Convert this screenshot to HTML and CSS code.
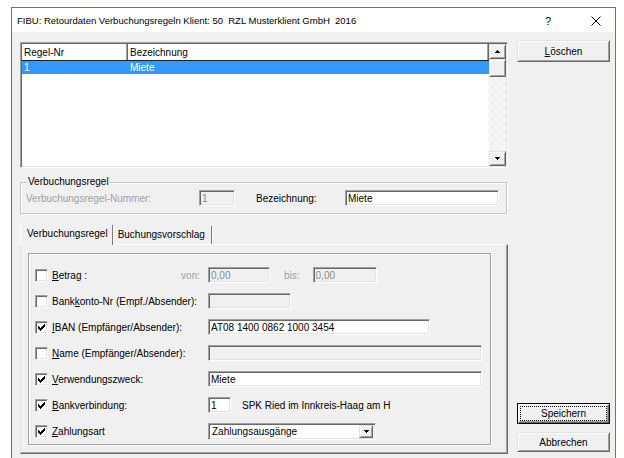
FILE: index.html
```
<!DOCTYPE html>
<html lang="de">
<head>
<meta charset="utf-8">
<title>FIBU: Retourdaten Verbuchungsregeln</title>
<link rel="stylesheet" href="styles.css">
</head>
<body>
<div class="window">
  <div class="titlebar">
    <span class="title">FIBU: Retourdaten Verbuchungsregeln Klient: 50&nbsp; RZL Musterklient GmbH&nbsp; 2016</span>
    <span class="tb-help">?</span>
    <span class="tb-close">
      <svg width="10" height="10" viewBox="0 0 10 10"><path d="M0.5 0.5L9.5 9.5M9.5 0.5L0.5 9.5" stroke="#000" stroke-width="1" fill="none"/></svg>
    </span>
  </div>

  <div class="client">
    <div class="main">
      <!-- rule list -->
      <div class="listview">
        <div class="lv-body">
          <div class="lv-header">
            <div class="lv-hcell col-nr">Regel-Nr</div>
            <div class="lv-hcell col-bez">Bezeichnung</div>
          </div>
          <div class="lv-row selected">
            <span class="col-nr">1</span>
            <span class="col-bez">Miete</span>
          </div>
        </div>
        <div class="vscroll">
          <div class="sb-btn">
            <svg width="5" height="3" viewBox="0 0 5 3"><path d="M2 0h1v1H2zM1 1h3v1H1zM0 2h5v1H0z" fill="#000"/></svg>
          </div>
          <div class="sb-thumb"></div>
          <div class="sb-track"></div>
          <div class="sb-btn">
            <svg width="5" height="3" viewBox="0 0 5 3"><path d="M0 0h5v1H0zM1 1h3v1H1zM2 2h1v1H2z" fill="#000"/></svg>
          </div>
        </div>
      </div>

      <!-- rule header -->
      <div class="groupbox">
        <span class="group-title">Verbuchungsregel</span>
        <span class="lbl disabled lbl-nummer">Verbuchungsregel-Nummer:</span>
        <input class="edit disabled w-nr" type="text" value="1" readonly>
        <span class="lbl lbl-bez">Bezeichnung:</span>
        <input class="edit w-bez" type="text" value="Miete" readonly>
      </div>

      <div class="tabs">
        <div class="tab active">Verbuchungsregel</div>
        <div class="tab">Buchungsvorschlag</div>
      </div>

      <div class="tabpanel">
        <div class="rules">
          <div class="row">
            <span class="check"></span>
            <span class="rlabel split"><span><u>B</u>etrag :</span><span class="disabled">von:</span></span>
            <span class="fields">
              <input class="edit disabled w-betrag" type="text" value="0,00" readonly>
              <span class="disabled bis">bis:</span>
              <input class="edit disabled w-betrag2" type="text" value="0,00" readonly>
            </span>
          </div>
          <div class="row">
            <span class="check"></span>
            <span class="rlabel">Bank<u>k</u>onto-Nr (Empf./Absender):</span>
            <span class="fields"><input class="edit disabled w-konto" type="text" value="" readonly></span>
          </div>
          <div class="row">
            <span class="check on"><svg width="7" height="7" viewBox="0 0 7 7"><path d="M0 2h1v3H0zM1 3h1v3H1zM2 4h1v3H2zM3 3h1v3H3zM4 2h1v3H4zM5 1h1v3H5zM6 0h1v3H6z" fill="#000"/></svg></span>
            <span class="rlabel"><u>I</u>BAN (Empfänger/Absender):</span>
            <span class="fields"><input class="edit w-iban" type="text" value="AT08 1400 0862 1000 3454" readonly></span>
          </div>
          <div class="row">
            <span class="check"></span>
            <span class="rlabel"><u>N</u>ame (Empfänger/Absender):</span>
            <span class="fields"><input class="edit disabled w-wide" type="text" value="" readonly></span>
          </div>
          <div class="row">
            <span class="check on"><svg width="7" height="7" viewBox="0 0 7 7"><path d="M0 2h1v3H0zM1 3h1v3H1zM2 4h1v3H2zM3 3h1v3H3zM4 2h1v3H4zM5 1h1v3H5zM6 0h1v3H6z" fill="#000"/></svg></span>
            <span class="rlabel"><u>V</u>erwendungszweck:</span>
            <span class="fields"><input class="edit w-wide" type="text" value="Miete" readonly></span>
          </div>
          <div class="row">
            <span class="check on"><svg width="7" height="7" viewBox="0 0 7 7"><path d="M0 2h1v3H0zM1 3h1v3H1zM2 4h1v3H2zM3 3h1v3H3zM4 2h1v3H4zM5 1h1v3H5zM6 0h1v3H6z" fill="#000"/></svg></span>
            <span class="rlabel"><u>B</u>ankverbindung:</span>
            <span class="fields">
              <input class="edit w-bank" type="text" value="1" readonly>
              <span class="bankname">SPK Ried im Innkreis-Haag am H</span>
            </span>
          </div>
          <div class="row">
            <span class="check on"><svg width="7" height="7" viewBox="0 0 7 7"><path d="M0 2h1v3H0zM1 3h1v3H1zM2 4h1v3H2zM3 3h1v3H3zM4 2h1v3H4zM5 1h1v3H5zM6 0h1v3H6z" fill="#000"/></svg></span>
            <span class="rlabel"><u>Z</u>ahlungsart</span>
            <span class="fields">
              <span class="combo">
                <span class="combo-text">Zahlungsausgänge</span>
                <span class="combo-btn"><svg width="5" height="3" viewBox="0 0 5 3"><path d="M0 0h5v1H0zM1 1h3v1H1zM2 2h1v1H2z" fill="#000"/></svg></span>
              </span>
            </span>
          </div>
        </div>
      </div>
    </div>

    <div class="side">
      <button class="btn" type="button"><u>L</u>öschen</button>
      <button class="btn default" type="button"><span class="focus">Speichern</span></button>
      <button class="btn" type="button">Abbrechen</button>
    </div>
  </div>
</div>
</body>
</html>
```
FILE: styles.css
```
* {
  box-sizing: border-box;
}

html,
body {
  margin: 0;
  width: 624px;
  height: 458px;
  overflow: hidden;
  background: #fff;
  font-family: "Liberation Sans", Arial, sans-serif;
  font-size: 10px;
  color: #000;
}

u {
  text-decoration-thickness: 1px;
  text-underline-offset: 1px;
}

/* ---------- window frame ---------- */
.window {
  margin: 7px 0 0 11px;
  width: 605px;
  height: 460px;
  border: 1px solid #2a85dd;
  border-bottom: none;
  display: flex;
  flex-direction: column;
}

.titlebar {
  height: 24px;
  flex: none;
  background: #fff;
  display: flex;
  align-items: center;
  padding-left: 5px;
}

.title {
  font-size: 9.5px;
  flex: 1;
  padding-top: 1px;
}

.tb-help {
  font-size: 11px;
  width: 46px;
  padding-top: 1px;
}

.tb-close {
  width: 24px;
  display: flex;
  align-items: center;
  padding-top: 1px;
}

/* ---------- client area ---------- */
.client {
  height: 426px;
  flex: none;
  background: #f0f0f0;
  display: flex;
  padding: 8px 0 0 8px;
}

.main {
  width: 488px;
  padding-top: 2px;
  display: flex;
  flex-direction: column;
}

.side {
  margin-left: 9px;
  width: 93px;
  display: flex;
  flex-direction: column;
  padding-bottom: 6px;
}

/* ---------- sunken controls ---------- */
.listview,
.edit,
.check,
.combo {
  border: 1px solid;
  border-color: #a0a0a0 #fff #fff #a0a0a0;
  box-shadow: inset 1px 1px 0 #696969, inset -1px -1px 0 #e3e3e3;
}

.listview {
  height: 126px;
  display: flex;
  background: #fff;
  padding: 1px;
}

.lv-body {
  flex: 1;
}

.lv-header {
  display: flex;
  height: 17px;
  border-bottom: 1px solid #202020;
}

.lv-hcell {
  display: flex;
  align-items: center;
  padding-left: 2px;
  padding-top: 1px;
  background: #fff;
  box-shadow: inset -1px 0 0 #696969, inset -2px 0 0 #a0a0a0;
}

.col-nr {
  width: 106px;
}

.col-bez {
  flex: 1;
  padding-left: 2px;
}

.lv-row {
  height: 13px;
  display: flex;
  align-items: center;
}

.lv-row span {
  padding-left: 2px;
}

.lv-row.selected {
  background: #3399ff;
  color: #fff;
}

.vscroll {
  width: 17px;
  display: flex;
  flex-direction: column;
}

.sb-btn,
.sb-thumb,
.combo-btn,
.btn {
  background: #f0f0f0;
  border: 1px solid;
  border-color: #e3e3e3 #696969 #696969 #e3e3e3;
  box-shadow: inset 1px 1px 0 #fff, inset -1px -1px 0 #a0a0a0;
}

.sb-btn {
  height: 15px;
  display: flex;
  align-items: center;
  justify-content: center;
}

.sb-thumb {
  height: 18px;
}

.sb-track {
  flex: 1;
  background: repeating-conic-gradient(#ececec 0 25%, #fff 0 50%) 0 0 / 2px 2px;
}

/* ---------- group box ---------- */
.groupbox {
  position: relative;
  margin-top: 14px;
  height: 32px;
  width: 487px;
  border: 1px solid #c4c4c4;
  box-shadow: inset 1px 1px 0 #fff, 1px 1px 0 #fff;
  display: flex;
  align-items: center;
  padding-left: 5px;
}

.group-title {
  position: absolute;
  top: -7px;
  left: 6px;
  padding: 0 1px;
  background: #f0f0f0;
}

.lbl-nummer {
  width: 173px;
}

.lbl-bez {
  margin-left: 21px;
  width: 89px;
}

.disabled {
  color: #a0a0a0;
}

.edit {
  height: 16px;
  padding: 1px 2px 0;
  font: inherit;
  color: #000;
  background: #fff;
  outline: none;
}

.edit.disabled {
  background: #f0f0f0;
  color: #8a8a8a;
}

.w-nr { width: 36px; }
.w-bez { width: 154px; }
.w-betrag { width: 62px; }
.w-betrag2 { width: 64px; }
.w-konto { width: 83px; }
.w-iban { width: 222px; }
.w-wide { width: 274px; }
.w-bank { width: 23px; }

/* ---------- tabs ---------- */
.tabs {
  display: flex;
  align-items: flex-end;
  height: 20px;
  margin-top: 11px;
  position: relative;
  z-index: 1;
}

.tab {
  display: flex;
  align-items: center;
  height: 18px;
  padding: 0 4px 2px 4px;
  background: #f0f0f0;
  border-right: 1px solid #7a7a7a;
  box-shadow: 1px 0 0 #fff;
}

.tab.active {
  height: 20px;
  padding-left: 6px;
  padding-bottom: 3px;
  border-left: 1px solid #fff;
}

.tab + .tab {
  margin-left: 1px;
  margin-bottom: 1px;
  padding-right: 6px;
}

.tabpanel {
  margin-top: -1px;
  height: 210px;
  border: 1px solid;
  border-color: #fff #696969 #696969 #e3e3e3;
  box-shadow: inset -1px -1px 0 #a0a0a0;
  padding: 8px 0 0 7px;
}

.rules {
  width: 463px;
  height: 192px;
  border: 1px solid #a0a0a0;
  box-shadow: inset 1px 1px 0 #fff, 1px 1px 0 #fff;
  padding: 8px 0 0 6px;
}

.row {
  height: 26px;
  display: grid;
  grid-template-columns: 13px 160px 1fr;
  align-items: center;
}

.check {
  width: 13px;
  height: 13px;
  background: #fff;
  display: flex;
  align-items: center;
  justify-content: center;
}

.rlabel {
  padding-left: 4px;
  white-space: nowrap;
}

.rlabel.split {
  display: flex;
  justify-content: space-between;
  padding-right: 8px;
}

.fields {
  display: flex;
  align-items: center;
}

.bis {
  margin: 0 13px 0 14px;
}

.bankname {
  margin-left: 11px;
}

.combo {
  width: 168px;
  height: 17px;
  background: #fff;
  display: flex;
  align-items: center;
  padding: 2px;
}

.combo-text {
  flex: 1;
  padding-left: 1px;
}

.combo-btn {
  width: 14px;
  height: 13px;
  display: flex;
  align-items: center;
  justify-content: center;
}

/* ---------- push buttons ---------- */
.btn {
  font: inherit;
  color: #000;
  height: 22px;
  width: 93px;
  padding: 0;
  display: flex;
  align-items: center;
  justify-content: center;
}

.btn.default {
  margin-top: auto;
  height: 21px;
  border: 1px solid #000;
  box-shadow: inset 1px 1px 0 #fff, inset -1px -1px 0 #696969, inset -2px -2px 0 #a0a0a0;
  padding: 3px;
}

.focus {
  flex: 1;
  align-self: stretch;
  display: flex;
  align-items: center;
  justify-content: center;
  outline: 1px dotted #000;
  outline-offset: 0;
}

.btn.default + .btn {
  margin-top: 8px;
  height: 20px;
}
```
